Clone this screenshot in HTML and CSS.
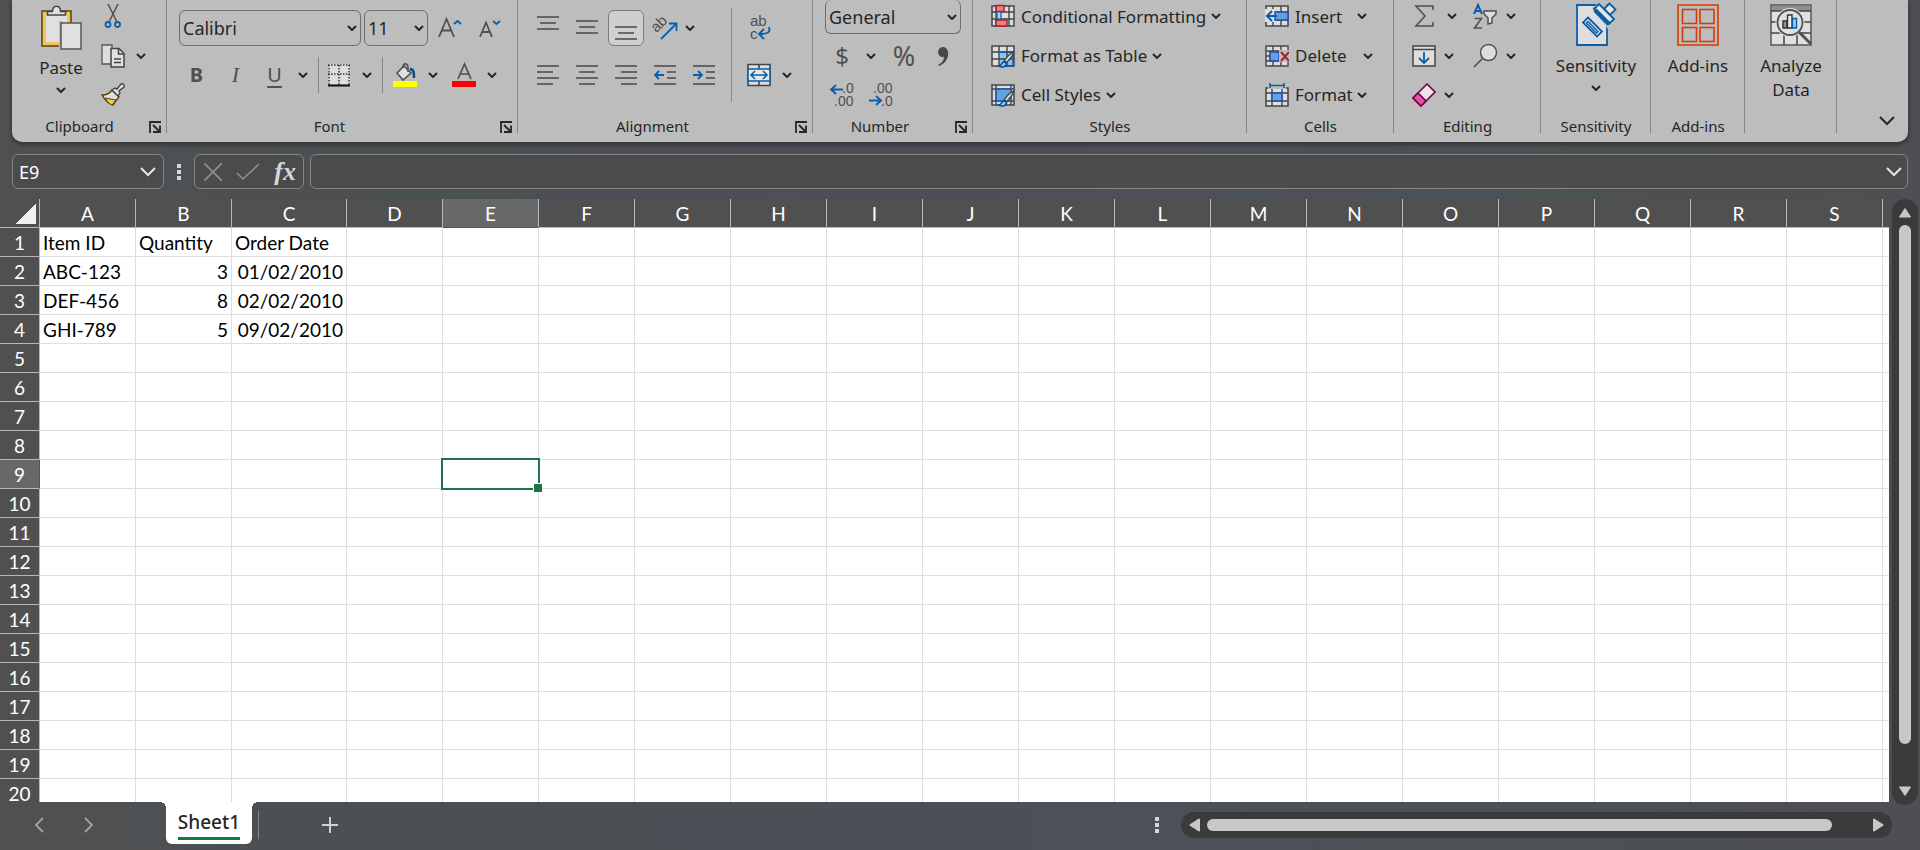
FILE: index.html
```html
<!DOCTYPE html>
<html lang="en">
<head>
<meta charset="utf-8">
<title>Sheet1</title>
<link rel="stylesheet" href="styles.css">
</head>
<body>
<svg class="sprite" aria-hidden="true">
  <symbol id="chev" viewBox="0 0 10 6"><path d="M1 1l4 4 4-4" fill="none" stroke="currentColor" stroke-width="2"/></symbol>
  <symbol id="chev-lg" viewBox="0 0 16 10"><path d="M1 1l7 7 7-7" fill="none" stroke="currentColor" stroke-width="2"/></symbol>
  <symbol id="launch" viewBox="0 0 12 12"><path d="M1 12V1h11M4 4l6 6M11 4.500v6.500h-7" fill="none" stroke="currentColor" stroke-width="1.800"/></symbol>
  <symbol id="brush" viewBox="0 0 16 16"><path d="M15 1c-3 1-7 5-9 8l2 2c3-3 6-7 7-10z" fill="#e0e0e0" stroke="#444" stroke-width="1.300"/><path d="M6 10c-3 0-2 4-5 4 2 2 7 1 7-2z" fill="#9cc8ea" stroke="#00509a" stroke-width="1.500"/></symbol>
</svg>

<header class="ribbon">
  <section class="group clipboard">
    <div class="body">
      <button class="big paste" type="button">
        <svg width="42" height="46" viewBox="0 0 42 46" aria-hidden="true"><path d="M2 7h29v35H2z" fill="#f0c45e" stroke="#5a430c" stroke-width="1.500"/><path d="M6 11h21v27H6z" fill="#e0e0e0"/><path d="M7.500 11V7.500h5c0-7 8-7 8 0h5V11z" fill="#e0e0e0" stroke="#444" stroke-width="1.500"/><path d="M19 17h4v27h-4z" fill="#bdbdbd"/><path d="M21 19h20v26H21z" fill="#e0e0e0" stroke="#555" stroke-width="1.500"/></svg>
        <span>Paste</span>
        <svg class="chev" aria-hidden="true"><use href="#chev"/></svg>
      </button>
      <div class="rows">
        <div class="row"><button class="tool" type="button" aria-label="Cut"><svg width="18" height="26" viewBox="0 0 18 26" aria-hidden="true"><path d="M4 1l9 18M14 1L5 19" fill="none" stroke="#505050" stroke-width="1.500"/><circle cx="4" cy="21.500" r="2.500" fill="none" stroke="#0a5fa8" stroke-width="1.800"/><circle cx="13.500" cy="21.500" r="2.500" fill="none" stroke="#0a5fa8" stroke-width="1.800"/></svg></button></div>
        <div class="row"><button class="tool" type="button" aria-label="Copy"><svg width="24" height="24" viewBox="0 0 24 24" aria-hidden="true"><path d="M1 1h10v19H1z" fill="#dedede" stroke="#555" stroke-width="1.300"/><path d="M10 4.500h8l5 5V23H10z" fill="#e0e0e0" stroke="#444" stroke-width="1.500"/><path d="M17.500 4.500V10H23M13 15h7M13 18.500h7" fill="none" stroke="#444" stroke-width="1.500"/></svg></button><button class="drop" type="button" aria-label="Copy options"><svg class="chev" aria-hidden="true"><use href="#chev"/></svg></button></div>
        <div class="row"><button class="tool" type="button" aria-label="Format Painter"><svg width="24" height="24" viewBox="0 0 24 24" aria-hidden="true"><path d="M1 12c4 0 8-2 10-5l7 7c-2 2-4 5-6 8C8 21 3 16 1 12z" fill="#e0e0e0" stroke="#5a430c" stroke-width="1.400"/><path d="M4 15l11 2-4 5c-3-1-5-4-7-7z" fill="#f0c45e" stroke="#5a430c" stroke-width="1"/><path d="M11 7l3-2 2 1 4-5c2-1 4 1 3 3l-5 4 1 2-2 3z" fill="#e0e0e0" stroke="#444" stroke-width="1.400"/></svg></button></div>
      </div>
    </div>
    <div class="caption"><span>Clipboard</span><button class="launcher" type="button" aria-label="Clipboard settings"><svg aria-hidden="true"><use href="#launch"/></svg></button></div>
  </section>

  <section class="group font">
    <div class="body two">
      <div class="row fields">
        <label class="combo combo-font"><select aria-label="Font"><option>Calibri</option></select><svg class="chev" aria-hidden="true"><use href="#chev"/></svg></label>
        <label class="combo combo-size"><select aria-label="Font size"><option>11</option></select><svg class="chev" aria-hidden="true"><use href="#chev"/></svg></label>
        <button class="tool grow" type="button" aria-label="Increase font size"><svg width="24" height="24" viewBox="0 0 24 24" aria-hidden="true"><path d="M1 21L8.500 3 16 21M4 14.500h9" fill="none" stroke="#505050" stroke-width="1.800"/><path d="M16 8l3.500-3L23 8" fill="none" stroke="#0a5fa8" stroke-width="2"/></svg></button>
        <button class="tool grow" type="button" aria-label="Decrease font size"><svg width="24" height="24" viewBox="0 0 24 24" aria-hidden="true"><path d="M2 21L8 6.500 14 21M4.500 16h7" fill="none" stroke="#505050" stroke-width="1.800"/><path d="M15 5l3.500 3L22 5" fill="none" stroke="#0a5fa8" stroke-width="2"/></svg></button>
      </div>
      <div class="row marks">
        <button class="tool wide bold" type="button" aria-label="Bold">B</button>
        <button class="tool wide italic" type="button" aria-label="Italic">I</button>
        <button class="tool wide underline" type="button" aria-label="Underline">U</button>
        <button class="drop" type="button" aria-label="Underline options"><svg class="chev" aria-hidden="true"><use href="#chev"/></svg></button>
        <i class="rule"></i>
        <button class="tool wide" type="button" aria-label="Borders"><svg width="24" height="24" viewBox="0 0 24 24" aria-hidden="true"><path d="M1 1h22v20H1z" fill="#dedede"/><path d="M1 2h22M1 11h22M2 2v20M12 2v20M22 2v20" fill="none" stroke="#333" stroke-width="1.500" stroke-dasharray="1.500 1.500"/><path d="M1 22.500h22" stroke="#111" stroke-width="2"/></svg></button>
        <button class="drop" type="button" aria-label="Border options"><svg class="chev" aria-hidden="true"><use href="#chev"/></svg></button>
        <i class="rule"></i>
        <button class="tool wide fill" type="button" aria-label="Fill Color"><svg width="24" height="26" viewBox="0 0 24 26" aria-hidden="true"><path d="M11 4l7 7-8 7-6-7z" fill="#e0e0e0" stroke="#505050" stroke-width="1.600"/><path d="M10 6c0-6 5-5 5 0v4" fill="none" stroke="#505050" stroke-width="1.600"/><path d="M17 7c4 0 4 4 4 9" fill="none" stroke="#0a4a80" stroke-width="2.500"/><path d="M0 19h24v6H0z" fill="#ff0"/></svg></button>
        <button class="drop" type="button" aria-label="Fill options"><svg class="chev" aria-hidden="true"><use href="#chev"/></svg></button>
        <button class="tool wide ink" type="button" aria-label="Font Color"><svg width="24" height="26" viewBox="0 0 24 26" aria-hidden="true"><path d="M6 17L12.500 2 19 17M8.500 12h8" fill="none" stroke="#505050" stroke-width="1.700"/><path d="M0 19h24v6H0z" fill="red"/></svg></button>
        <button class="drop" type="button" aria-label="Font color options"><svg class="chev" aria-hidden="true"><use href="#chev"/></svg></button>
      </div>
    </div>
    <div class="caption"><span>Font</span><button class="launcher" type="button" aria-label="Font settings"><svg aria-hidden="true"><use href="#launch"/></svg></button></div>
  </section>

  <section class="group alignment">
    <div class="body">
      <div class="two align-set">
        <div class="row">
          <button class="tool" type="button" aria-label="Top Align"><svg class="lines" viewBox="0 0 22 24" aria-hidden="true"><path d="M0 1h22M3 7h16M0 13h22"/></svg></button>
          <button class="tool" type="button" aria-label="Middle Align"><svg class="lines" viewBox="0 0 22 24" aria-hidden="true"><path d="M0 5h22M3 11h16M0 17h22"/></svg></button>
          <button class="tool pressed" type="button" aria-label="Bottom Align"><svg class="lines" viewBox="0 0 22 24" aria-hidden="true"><path d="M0 11h22M3 17h16M0 23h22"/></svg></button>
          <button class="tool" type="button" aria-label="Orientation"><svg class="lettered" width="26" height="26" viewBox="0 0 26 26" aria-hidden="true"><text x="1" y="14" transform="rotate(-45 8 12)">ab</text><path d="M9 24L24 9M17 8.500h7.500V16" fill="none" stroke="#0a5fa8" stroke-width="1.800"/></svg></button>
          <button class="drop near" type="button" aria-label="Orientation options"><svg class="chev" aria-hidden="true"><use href="#chev"/></svg></button>
        </div>
        <div class="row">
          <button class="tool" type="button" aria-label="Align Left"><svg class="lines" viewBox="0 0 22 24" aria-hidden="true"><path d="M0 3h22M0 9h16M0 15h22M0 21h16"/></svg></button>
          <button class="tool" type="button" aria-label="Center"><svg class="lines" viewBox="0 0 22 24" aria-hidden="true"><path d="M0 3h22M3 9h16M0 15h22M3 21h16"/></svg></button>
          <button class="tool" type="button" aria-label="Align Right"><svg class="lines" viewBox="0 0 22 24" aria-hidden="true"><path d="M0 3h22M6 9h16M0 15h22M6 21h16"/></svg></button>
          <button class="tool" type="button" aria-label="Decrease Indent"><svg class="lines" viewBox="0 0 22 24" aria-hidden="true"><path d="M0 3h22M13 9h9M13 15h9M0 21h22"/><path class="blue" d="M10 12H1M5 8l-4 4 4 4"/></svg></button>
          <button class="tool" type="button" aria-label="Increase Indent"><svg class="lines" viewBox="0 0 22 24" aria-hidden="true"><path d="M0 3h22M13 9h9M13 15h9M0 21h22"/><path class="blue" d="M0 12h9M5 8l4 4-4 4"/></svg></button>
        </div>
      </div>
      <i class="rule tall"></i>
      <div class="two wrap-set">
        <div class="row"><button class="tool" type="button" aria-label="Wrap Text"><svg class="lettered" width="24" height="26" viewBox="0 0 24 26" aria-hidden="true"><text x="3" y="11">ab</text><text x="3" y="24">c</text><path d="M22 12c2 6-2 7-10 7M17 14l-5 5 5 5" fill="none" stroke="#0a5fa8" stroke-width="1.900"/></svg></button></div>
        <div class="row"><button class="tool" type="button" aria-label="Merge and Center"><svg width="24" height="24" viewBox="0 0 24 24" aria-hidden="true"><path d="M1 1.500h22v21H1z" fill="#dedede" stroke="#444" stroke-width="1.600"/><path d="M12 1v22" stroke="#444" stroke-width="1.600"/><path d="M1 6h22v12H1z" fill="#e6e6e6" stroke="#0a5fa8" stroke-width="1.600"/><path d="M4 12h16M8 8l-4 4 4 4M16 8l4 4-4 4" fill="none" stroke="#0a5fa8" stroke-width="1.600"/></svg></button><button class="drop" type="button" aria-label="Merge options"><svg class="chev" aria-hidden="true"><use href="#chev"/></svg></button></div>
      </div>
    </div>
    <div class="caption"><span>Alignment</span><button class="launcher" type="button" aria-label="Alignment settings"><svg aria-hidden="true"><use href="#launch"/></svg></button></div>
  </section>

  <section class="group number">
    <div class="body rows">
      <div class="row top"><label class="combo combo-number"><select aria-label="Number format"><option>General</option></select><svg class="chev" aria-hidden="true"><use href="#chev"/></svg></label></div>
      <div class="row">
        <button class="tool dollar" type="button" aria-label="Accounting format">$</button><button class="drop money" type="button" aria-label="Accounting options"><svg class="chev" aria-hidden="true"><use href="#chev"/></svg></button>
        <button class="tool percent" type="button" aria-label="Percent Style">%</button>
        <button class="tool" type="button" aria-label="Comma Style"><svg width="14" height="22" viewBox="0 0 14 22" aria-hidden="true"><path d="M2 20c4-2 6-5 6-8a5 5 0 1 1 4-5c1 6-3 12-9 14z" fill="#484848"/></svg></button>
      </div>
      <div class="row">
        <button class="tool" type="button" aria-label="Increase Decimal"><svg class="lettered" width="26" height="26" viewBox="0 0 26 26" aria-hidden="true"><text class="digits" x="13" y="11">.0</text><text class="digits" x="5" y="24">.00</text><path d="M14 7.500H2M7 3L2 7.500 7 12" fill="none" stroke="#0a5fa8" stroke-width="1.900"/></svg></button>
        <button class="tool decimal" type="button" aria-label="Decrease Decimal"><svg class="lettered" width="26" height="26" viewBox="0 0 26 26" aria-hidden="true"><text class="digits" x="5" y="11">.00</text><text class="digits" x="13" y="24">.0</text><path d="M1 18.500h12M8 14l5 4.500L8 23" fill="none" stroke="#0a5fa8" stroke-width="1.900"/></svg></button>
      </div>
    </div>
    <div class="caption"><span>Number</span><button class="launcher" type="button" aria-label="Number settings"><svg aria-hidden="true"><use href="#launch"/></svg></button></div>
  </section>

  <section class="group styles">
    <div class="body rows">
      <div class="row"><button class="wordy" type="button"><svg width="24" height="24" viewBox="0 0 24 24" aria-hidden="true"><path d="M1 2h22v20H1z" fill="#dedede"/><path d="M1 8h22M1 15h22M5 2v20M18 2v20" stroke="#444" stroke-width="1.400"/><path d="M1 2h22v20H1z" fill="none" stroke="#444" stroke-width="1.500"/><path d="M5 1.500h8v6H5zM5 16h11v6H5z" fill="#ea7f80" stroke="#a4262c" stroke-width="1.500"/><path d="M6 8h4v7H6z" fill="#a9d4f5" stroke="#0a5fa8" stroke-width="1.200"/></svg><span>Conditional Formatting</span><svg class="chev" aria-hidden="true"><use href="#chev"/></svg></button></div>
      <div class="row"><button class="wordy" type="button"><svg width="24" height="24" viewBox="0 0 24 24" aria-hidden="true"><path d="M1 2h22v20H1z" fill="#dedede"/><path d="M8 8h15v14H8z" fill="#8fc3ee"/><path d="M1 8h22M1 15h22M8 2v20M16 2v20" stroke="#444" stroke-width="1.400"/><path d="M1 2h22v20H1z" fill="none" stroke="#444" stroke-width="1.500"/><path d="M8 8h14v14H12" fill="none" stroke="#0a5fa8" stroke-width="1.500"/><use href="#brush" x="7" y="7" width="17" height="17"/></svg><span>Format as Table</span><svg class="chev" aria-hidden="true"><use href="#chev"/></svg></button></div>
      <div class="row"><button class="wordy" type="button"><svg width="24" height="24" viewBox="0 0 24 24" aria-hidden="true"><path d="M1 2h22v20H1z" fill="#dedede"/><path d="M1 6h22M1 18h22M5 2v20M20 2v20" stroke="#444" stroke-width="1.400"/><path d="M1 2h22v20H1z" fill="none" stroke="#444" stroke-width="1.500"/><path d="M5 6h15v12H5z" fill="#62a3dc" stroke="#2450b4" stroke-width="1.500"/><use href="#brush" x="7" y="7" width="17" height="17"/></svg><span>Cell Styles</span><svg class="chev" aria-hidden="true"><use href="#chev"/></svg></button></div>
    </div>
    <div class="caption"><span>Styles</span></div>
  </section>

  <section class="group cells">
    <div class="body rows">
      <div class="row"><button class="wordy" type="button"><svg width="24" height="24" viewBox="0 0 24 24" aria-hidden="true"><path d="M1 2h22v20H1z" fill="#dedede"/><path d="M1 8h22M1 16h22M8 2v20M16 2v20" stroke="#444" stroke-width="1.400"/><path d="M1 2h22v20H1z" fill="none" stroke="#444" stroke-width="1.500"/><path d="M0 5h10v13H0z" fill="#dedede"/><path d="M10 8h13v8H10z" fill="#62a3dc" stroke="#2450b4" stroke-width="1.500"/><path d="M12 12H2M7 7l-5 5 5 5" fill="none" stroke="#0a5fa8" stroke-width="2"/></svg><span class="verb">Insert</span><svg class="chev" aria-hidden="true"><use href="#chev"/></svg></button></div>
      <div class="row"><button class="wordy" type="button"><svg width="24" height="24" viewBox="0 0 24 24" aria-hidden="true"><path d="M1 2h22v5H1zM1 17h22v5H1zM1 7h4v10H1z" fill="#dedede" stroke="#444" stroke-width="1.400"/><path d="M8 2v5M16 2v5M8 17v5M16 17v5M1 12h4" stroke="#444" stroke-width="1.400"/><path d="M5 8h9v9H5z" fill="#62a3dc" stroke="#2450b4" stroke-width="1.500"/><path d="M14 6h10v12H14z" fill="#bdbdbd"/><path d="M16 8l8 9M24 8l-8 9" stroke="#a4262c" stroke-width="2"/></svg><span class="verb longer">Delete</span><svg class="chev" aria-hidden="true"><use href="#chev"/></svg></button></div>
      <div class="row"><button class="wordy" type="button"><svg width="24" height="24" viewBox="0 0 24 24" aria-hidden="true"><path d="M1 5h22v18H1z" fill="#dedede" stroke="#444" stroke-width="1.500"/><path d="M1 10h22M1 18h22M7 5v18M17 5v18" stroke="#444" stroke-width="1.400"/><path d="M7 10h10v8H7z" fill="#62a3dc" stroke="#2450b4" stroke-width="1.500"/><path d="M3 3h18v3H3z" fill="#bdbdbd"/><path d="M5 0v5M19 0v5M5 2.500h14" stroke="#0a5fa8" stroke-width="1.600"/></svg><span class="verb">Format</span><svg class="chev" aria-hidden="true"><use href="#chev"/></svg></button></div>
    </div>
    <div class="caption"><span>Cells</span></div>
  </section>

  <section class="group editing">
    <div class="body rows">
      <div class="row pair">
        <button class="duo sum" type="button" aria-label="AutoSum"><svg width="24" height="24" viewBox="0 0 24 24" aria-hidden="true"><path d="M21 6V2H4l9 10L4 22h17v-4" fill="none" stroke="#505050" stroke-width="1.600"/></svg><svg class="chev" aria-hidden="true"><use href="#chev"/></svg></button>
        <button class="duo" type="button" aria-label="Sort and Filter"><svg width="26" height="26" viewBox="0 0 26 26" aria-hidden="true"><path d="M2 11L6 2l4 9M3.500 8h5" fill="none" stroke="#0a5fa8" stroke-width="2"/><path d="M2.500 15.500h7L2.500 25H10" fill="none" stroke="#505050" stroke-width="1.600"/><path d="M12 8h12v3l-4 4v5l-4 1v-6l-4-4z" fill="#dedede" stroke="#505050" stroke-width="1.500"/></svg><svg class="chev" aria-hidden="true"><use href="#chev"/></svg></button>
      </div>
      <div class="row pair">
        <button class="duo" type="button" aria-label="Fill"><svg width="24" height="24" viewBox="0 0 24 24" aria-hidden="true"><path d="M1 2h22v20H1zM1 5.500h22" fill="#dedede" stroke="#444" stroke-width="1.500"/><path d="M12 8v11M7 14l5 5 5-5" fill="none" stroke="#0a5fa8" stroke-width="1.800"/></svg><svg class="chev" aria-hidden="true"><use href="#chev"/></svg></button>
        <button class="duo" type="button" aria-label="Find and Select"><svg width="26" height="26" viewBox="0 0 26 26" aria-hidden="true"><circle cx="16.500" cy="9.500" r="8" fill="#dedede" stroke="#505050" stroke-width="1.500"/><path d="M11 15l-9 9" stroke="#505050" stroke-width="1.600"/></svg><svg class="chev" aria-hidden="true"><use href="#chev"/></svg></button>
      </div>
      <div class="row pair">
        <button class="duo" type="button" aria-label="Clear"><svg width="24" height="24" viewBox="0 0 24 24" aria-hidden="true"><path d="M1 15L15 1l8 8L9 23z" fill="#e6e6e6" stroke="#800048" stroke-width="1.600"/><path d="M1 15l5-5 8 8-5 5z" fill="#dd56a6" stroke="#800048" stroke-width="1.600"/></svg><svg class="chev" aria-hidden="true"><use href="#chev"/></svg></button>
      </div>
    </div>
    <div class="caption"><span>Editing</span></div>
  </section>

  <section class="group sensitivity">
    <div class="body">
      <button class="big" type="button">
        <svg width="42" height="46" viewBox="0 0 42 46" aria-hidden="true"><path d="M2 4h30v40H2z" fill="#dedede" stroke="#0a5fa8" stroke-width="1.800"/><path d="M17 7L26 0l12 8 3 12-8 8z" fill="#bdbdbd"/><path d="M13 16.500L27 30.500l-5 5L8 21.500z" fill="#e6e6e6" stroke="#0a5fa8" stroke-width="1.800"/><path d="M13 20.500l10 10-1.500 1.500-10-10z" fill="none" stroke="#0a5fa8" stroke-width="1.400"/><path d="M29 8l5.500-5.500 6 6L35 14z" fill="#e6e6e6" stroke="#0a5fa8" stroke-width="1.800"/><path d="M24 3l15 15-5 5L19 8z" fill="#e6e6e6" stroke="#0a5fa8" stroke-width="1.800"/><path d="M20 9l14 14" stroke="#0a5fa8" stroke-width="4.500"/></svg>
        <span>Sensitivity</span>
        <svg class="chev" aria-hidden="true"><use href="#chev"/></svg>
      </button>
    </div>
    <div class="caption"><span>Sensitivity</span></div>
  </section>

  <section class="group addins">
    <div class="body">
      <button class="big" type="button">
        <svg width="42" height="46" viewBox="0 0 42 46" aria-hidden="true"><g fill="none" stroke="#d83b01" stroke-width="1.600"><path d="M1 4h40v40H1zM5.500 8.500h14v14h-14zM23 8.500h14v14H23zM5.500 26.500h14v14h-14zM23 26.500h14v14H23z"/></g></svg>
        <span>Add-ins</span>
      </button>
    </div>
    <div class="caption"><span>Add-ins</span></div>
  </section>

  <section class="group analyze">
    <div class="body">
      <button class="big" type="button">
        <svg width="42" height="46" viewBox="0 0 42 46" aria-hidden="true"><path d="M1 4h40v40H1z" fill="#e0e0e0" stroke="#555" stroke-width="1.500"/><path d="M2 5h38v5H2z" fill="#8e8e8e"/><path d="M1 10h40M1 21h40M1 32h40M14 32v12M27 32v12" stroke="#444" stroke-width="1.500"/><circle cx="20" cy="21.500" r="14.500" fill="#e0e0e0"/><circle cx="20" cy="21.500" r="12.500" fill="#e0e0e0" stroke="#505050" stroke-width="1.800"/><path d="M29 31l12 12" stroke="#505050" stroke-width="3"/><path d="M13 20h4v7h-4z" fill="#8e8e8e" stroke="#333" stroke-width="1.400"/><path d="M17.500 14h4.500v13h-4.500z" fill="#eee" stroke="#333" stroke-width="1.400"/><path d="M22.500 17.500h4V27h-4z" fill="#9cd0f8" stroke="#0a5fa8" stroke-width="1.400"/></svg>
        <span>Analyze<br>Data</span>
      </button>
    </div>
  </section>

  <button class="collapse" type="button" aria-label="Collapse ribbon"><svg class="chev-lg" aria-hidden="true"><use href="#chev-lg"/></svg></button>
</header>

<div class="formula-bar">
  <label class="name-box"><input type="text" value="E9" aria-label="Name box"><svg class="chev-lg" aria-hidden="true"><use href="#chev-lg"/></svg></label>
  <i class="dots"></i>
  <div class="entry">
    <button type="button" aria-label="Cancel"><svg width="18" height="18" viewBox="0 0 18 18" aria-hidden="true"><path d="M0 0l18 18M18 0L0 18" stroke="#909090" stroke-width="1.600"/></svg></button>
    <button type="button" aria-label="Enter"><svg width="24" height="18" viewBox="0 0 24 18" aria-hidden="true"><path d="M1 10l6 6L23 1" fill="none" stroke="#909090" stroke-width="1.600"/></svg></button>
    <button class="fx" type="button" aria-label="Insert Function">fx</button>
  </div>
  <label class="formula"><input type="text" aria-label="Formula bar"><svg class="chev-lg" aria-hidden="true"><use href="#chev-lg"/></svg></label>
</div>

<main class="workspace">
  <div class="sheet"><table id="grid" aria-label="Sheet1"></table></div>
  <div class="scroll vertical">
    <button type="button" aria-label="Scroll up"><svg width="14" height="11" viewBox="0 0 14 11" aria-hidden="true"><path d="M7 1.500L12.500 10h-11z"/></svg></button>
    <div class="thumb"></div>
    <button type="button" aria-label="Scroll down"><svg width="14" height="11" viewBox="0 0 14 11" aria-hidden="true"><path d="M7 9.500L12.500 1h-11z"/></svg></button>
  </div>
</main>

<footer class="tabs">
  <button class="nav" type="button" aria-label="Previous sheet"><svg width="10" height="16" viewBox="0 0 10 16" aria-hidden="true"><path d="M9 1L2 8l7 7"/></svg></button>
  <button class="nav" type="button" aria-label="Next sheet"><svg width="10" height="16" viewBox="0 0 10 16" aria-hidden="true"><path d="M1 1l7 7-7 7"/></svg></button>
  <button class="tab" type="button"><span>Sheet1</span></button>
  <i class="tab-rule"></i>
  <button class="add" type="button" aria-label="New sheet"><svg width="18" height="18" viewBox="0 0 18 18" aria-hidden="true"><path d="M9 1v16M1 9h16"/></svg></button>
  <i class="dots small"></i>
  <div class="scroll horizontal">
    <button type="button" aria-label="Scroll left"><svg width="11" height="14" viewBox="0 0 11 14" aria-hidden="true"><path d="M1.500 7L10 1.500v11z"/></svg></button>
    <div class="thumb"></div>
    <button type="button" aria-label="Scroll right"><svg width="11" height="14" viewBox="0 0 11 14" aria-hidden="true"><path d="M9.500 7L1 1.500v11z"/></svg></button>
  </div>
</footer>
<script src="grid.js"></script>
</body>
</html>
```

FILE: styles.css
```css
* { box-sizing: border-box; }

body {
  margin: 0;
  height: 100vh;
  overflow: hidden;
  display: flex;
  flex-direction: column;
  background: linear-gradient(90deg, #4f5052 0%, #4b5053 25%, #4d4f58 48%, #4d5058 62%, #4b5154 78%, #4e4f52 100%);
  color: #262626;
  font-family: "Noto Sans", "Open Sans", sans-serif;
  font-size: 16px;
}

button, select, input {
  margin: 0;
  padding: 0;
  border: 0;
  background: none;
  color: inherit;
  font: inherit;
  appearance: none;
}

svg { display: block; flex: none; }
.sprite { position: absolute; width: 0; height: 0; }
.chev { width: 10px; height: 6px; }
.chev-lg { width: 16px; height: 10px; }

/* Ribbon */
.ribbon {
  display: flex;
  flex: none;
  height: 142px;
  margin: 0 12px;
  background: #bdbdbd;
  border-radius: 0 0 10px 10px;
  box-shadow: 0 2px 5px #2c2c2c;
}

.group {
  display: grid;
  grid-template-rows: 116px 24px;
  position: relative;
  flex: none;
}
.group::after {
  content: "";
  position: absolute;
  top: 0;
  right: 0;
  width: 1px;
  height: 133px;
  background: #868686;
}
.clipboard { width: 155px; }
.font { width: 351px; }
.alignment { width: 295px; }
.number { width: 160px; }
.styles { width: 274px; }
.cells { width: 147px; }
.editing { width: 147px; }
.sensitivity { width: 110px; }
.addins { width: 94px; }
.analyze { width: 92px; }

.body { display: flex; }
.body.two, .body.rows { display: block; }
.two { padding-top: 4px; }
.row { display: flex; align-items: center; height: 39px; }
.rows .row:first-child { height: 36px; padding-bottom: 4px; }
.two .row { height: 47px; }

.caption {
  display: flex;
  justify-content: center;
  align-items: center;
  position: relative;
  height: 20px;
  font-size: 15px;
}
.clipboard .caption { padding-right: 20px; }
.font .caption { padding-right: 26px; }
.alignment .caption { padding-right: 26px; }
.number .caption { padding-right: 26px; }
.launcher { position: absolute; right: 6px; top: 5px; }
.launcher svg { width: 12px; height: 12px; }

.tool {
  display: flex;
  justify-content: center;
  align-items: center;
  flex: none;
  width: 34px;
  height: 36px;
  color: #505050;
  font-size: 20px;
}
.tool.wide { width: 39px; }
.drop { display: flex; justify-content: center; align-items: center; width: 18px; height: 36px; }
.lettered { overflow: visible; }
.lettered text { fill: #505050; font-family: "Liberation Sans", Arial, sans-serif; font-size: 15px; }
.lettered .digits { font-size: 14px; }

.big {
  display: flex;
  flex-direction: column;
  align-items: center;
  width: 100%;
  padding-top: 1px;
  font-size: 17px;
  line-height: 24px;
}
.big > span { padding-top: 7px; }
.big .chev { margin-top: 7px; }
.big.paste { width: 98px; padding-top: 4px; }
.big.paste > span { padding-top: 6px; }

.clipboard .drop { margin-left: 2px; }
.clipboard .tool { margin-left: -14px; }

.fields { gap: 3px; padding-left: 12px; }
.combo { display: grid; align-items: center; height: 36px; border: 1px solid #6e6e6e; border-radius: 6px; }
.combo > * { grid-area: 1 / 1; }
.combo select { width: 100%; height: 34px; padding-left: 3px; font-size: 18px; }
.combo .chev { justify-self: end; margin-right: 3px; }
.combo-font { width: 182px; }
.combo-size { width: 64px; }
.combo-number { width: 136px; height: 34px; border-top: 0; }
.combo-number select { height: 32px; }
.grow { width: 37px; }

.marks { padding-left: 10px; }
.bold { font-weight: 700; }
.italic { font-family: "Liberation Serif", serif; font-style: italic; font-size: 22px; }
.underline { text-decoration: underline; text-underline-offset: 4px; }
.fill, .ink { margin-left: 2px; }
.rule { width: 1px; height: 36px; margin-left: 6px; background: #868686; }
.rule.tall { height: 94px; margin: 8px 0 0 0; }

.align-set { width: 213px; padding-left: 13px; }
.align-set .row { gap: 5px; }
.drop.near { width: 16px; margin-left: -5px; }
.pressed { height: 36px; width: 36px; margin: 0 -1px; border: 1px solid #7c7c7c; border-radius: 6px; background: #cfcfcf; }
.lines { width: 22px; height: 24px; fill: none; stroke: #484848; stroke-width: 1.6; }
.lines .blue { stroke: #0a5fa8; stroke-width: 1.8; }
.wrap-set { padding-left: 10px; }
.wrap-set .drop { margin-left: 2px; }

.number .row { padding-left: 12px; }
.number .row.top { align-items: flex-start; padding-bottom: 0; }
.dollar { font-size: 24px; }
.drop.money { margin-left: 3px; }
.percent { margin-left: 7px; font-size: 27px; }
.percent + .tool { margin-left: 5px; }
.decimal { margin-left: 5px; }

.wordy { display: flex; align-items: center; gap: 6px; padding-left: 18px; font-size: 17px; white-space: nowrap; }
.wordy .chev { margin-left: -1px; }
.verb { width: 57px; text-align: left; }
.verb.longer { width: 63px; }

.pair { padding-left: 18px; gap: 18px; }
.duo { display: flex; align-items: center; gap: 8px; height: 36px; width: 42px; }
.duo.sum { gap: 11px; }
.duo + .duo { gap: 8px; width: 44px; }

.collapse { align-self: flex-end; margin: 0 13px 16px auto; }

/* Formula bar */
.formula-bar { display: flex; flex: none; height: 35px; margin: 12px 12px 10px; color: #e6e6e6; }
.name-box, .entry, .formula {
  display: flex;
  align-items: center;
  background: #4b4b4b;
  border: 1px solid #868686;
  border-radius: 6px;
}
.name-box { width: 152px; padding: 0 7px 0 6px; }
.name-box input { width: 100%; color: #fff; font-size: 18px; }
.dots {
  align-self: center;
  width: 4px;
  height: 16px;
  margin: 0 13px;
  background: repeating-linear-gradient(#d6d6d6 0 4px, transparent 4px 6px);
}
.entry { width: 110px; padding: 0 7px 0 9px; justify-content: space-between; }
.fx { font: italic 700 26px/30px "Liberation Serif", serif; color: #d6d6d6; }
.formula { flex: 1; margin-left: 6px; padding-right: 5px; }
.formula input { flex: 1; height: 100%; }

/* Worksheet */
.workspace { display: flex; flex: 1; min-height: 0; gap: 3px; padding-right: 2px; }
.sheet { flex: 1; min-width: 0; overflow: hidden; background: #fff; }
table { width: 100%; table-layout: fixed; border-spacing: 0; color: #000; font-family: Lato, "Noto Sans", sans-serif; font-size: 19px; line-height: 24px; }
th, td { height: 29px; padding: 2px 3px 0; border-right: 1px solid #dedede; border-bottom: 1px solid #dedede; white-space: nowrap; overflow: visible; }
td { text-align: left; }
td.numeric { text-align: right; }
th { background: #505050; color: #fff; font-weight: 400; border-color: #b8b8b8; }
tr > :last-child { border-right: 0; }
.col-w { width: 96px; }
.col-date { width: 115px; }
.col-head { width: 40px; }
.active-head { background: #686868; }
thead .active-head { border-bottom-color: #217346; }
tbody .active-head { border-right-color: #217346; }
.corner { padding: 0 3px 3px; vertical-align: bottom; }
.corner i { display: block; width: 20px; height: 20px; margin-left: auto; background: linear-gradient(135deg, transparent 50%, #f0f0f0 50%); }
.selected { position: relative; }
.selected::before { content: ""; position: absolute; inset: -2px; border: 2px solid #217346; }
.selected::after { content: ""; position: absolute; right: -4px; bottom: -4px; width: 8px; height: 8px; background: #217346; border: solid #fff; border-width: 1px 0 0 1px; }

/* Scroll bars */
.scroll { display: flex; align-items: center; background: #3b3b3b; border-radius: 13px; }
.scroll svg { fill: #c8c8c8; stroke: #c8c8c8; stroke-linejoin: round; }
.thumb { background: #c8c8c8; border-radius: 6px; }
.vertical { flex-direction: column; width: 26px; margin-bottom: -3px; padding: 8px 0; }
.vertical .thumb { width: 12px; flex: 1; margin: 7px 0 42px; }
.horizontal { height: 26px; flex: none; width: 37.7%; margin-right: 28px; padding: 0 8px; }
.horizontal .thumb { height: 12px; flex: 1; margin: 0 41px 0 7px; }

/* Sheet tabs */
.tabs { display: flex; align-items: center; flex: none; height: 48px; padding: 0 0 2px 34px; }
.tabs svg { stroke-width: 2; }
.nav svg { fill: none; stroke: #a0a0a0; }
.nav + .nav { margin-left: 40px; }
.tab {
  position: relative;
  align-self: flex-start;
  height: 42px;
  width: 86px;
  margin-left: 72px;
  background: #fff;
  border-radius: 0 0 6px 6px;
  font-size: 19px;
  font-weight: 500;
}
.tab span { display: inline-block; line-height: 29px; padding-top: 2px; border-bottom: 3px solid #107c41; }
.tab::before, .tab::after { content: ""; position: absolute; top: 0; width: 6px; height: 6px; }
.tab::before { left: -6px; background: radial-gradient(circle at 0 100%, transparent 6px, #fff 6px); }
.tab::after { right: -6px; background: radial-gradient(circle at 100% 100%, transparent 6px, #fff 6px); }
.tab-rule { width: 1px; height: 28px; margin-left: 6px; background: #868686; }
.add { margin-left: 62px; }
.add svg { stroke: #d0d0d0; }
.dots.small { margin: 0 22px 0 auto; }
```

FILE: grid.js
```js
const columns = "ABCDEFGHIJKLMNOPQRS".split("");
const rowCount = 20;
const active = { column: "E", row: 9 };
const records = [
  ["Item ID", "Quantity", "Order Date"],
  ["ABC-123", 3, "01/02/2010"],
  ["DEF-456", 8, "02/02/2010"],
  ["GHI-789", 5, "09/02/2010"]
];

const widths = columns.map(c => `<col class="${c === "C" ? "col-date" : "col-w"}">`).join("");
const heads = columns.map(c => `<th scope="col"${c === active.column ? ' class="active-head"' : ""}>${c}</th>`).join("");

let rows = "";
for (let r = 1; r <= rowCount; r++) {
  const cells = columns.map((c, i) => {
    const value = (records[r - 1] || [])[i] ?? "";
    const numeric = r > 1 && i > 0 && value !== "";
    const selected = c === active.column && r === active.row;
    const name = numeric ? ' class="numeric"' : selected ? ' class="selected"' : "";
    return `<td${name}>${value}</td>`;
  }).join("");
  rows += `<tr><th scope="row"${r === active.row ? ' class="active-head"' : ""}>${r}</th>${cells}<td></td></tr>`;
}

document.getElementById("grid").innerHTML =
  `<colgroup><col class="col-head">${widths}<col></colgroup>` +
  `<thead><tr><th class="corner"><i></i></th>${heads}<th></th></tr></thead><tbody>${rows}</tbody>`;
```
